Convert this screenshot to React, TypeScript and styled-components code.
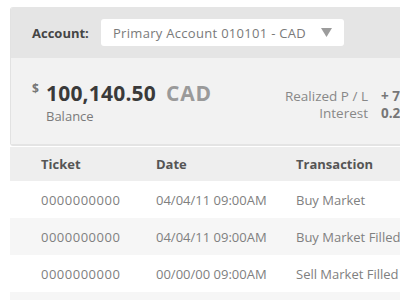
import styled, { createGlobalStyle } from 'styled-components';

const GlobalStyle = createGlobalStyle`
  html, body {
    margin: 0;
    padding: 0;
    background: #ffffff;
    overflow: hidden;
    font-family: "Open Sans", "Liberation Sans", sans-serif;
  }
`;

const Page = styled.div`
  width: 400px;
  height: 300px;
  overflow: hidden;
  padding: 7px 0 0 10px;
  box-sizing: border-box;
`;

const Sheet = styled.div`
  width: 640px;
`;

const Panel = styled.div`
  border-left: 1px solid #e2e2e2;
  border-bottom: 2px solid #e4e4e4;
  border-radius: 3px 0 0 3px;
  overflow: hidden;
`;

const AccountBar = styled.div`
  display: flex;
  align-items: center;
  height: 51px;
  padding-left: 21px;
  background: #e5e5e5;
`;

const Label = styled.span`
  font-size: 13px;
  font-weight: 700;
  color: #454545;
  width: 69px;
`;

const Select = styled.div`
  display: flex;
  align-items: center;
  justify-content: space-between;
  width: 243px;
  height: 27px;
  padding: 0 12px;
  box-sizing: border-box;
  background: #ffffff;
  border-radius: 3px;
  font-size: 13px;
  letter-spacing: 0.3px;
  color: #7a7a7a;
`;

const BalancePanel = styled.div`
  display: flex;
  align-items: flex-start;
  height: 86px;
  padding: 20px 0 0 21px;
  box-sizing: border-box;
  background: #f2f2f2;
`;

const BalanceBlock = styled.div`
  width: 250px;
`;

const Amount = styled.div`
  display: flex;
  align-items: flex-start;
  line-height: 30px;
`;

const Dollar = styled.span`
  font-size: 12px;
  font-weight: 700;
  color: #777;
  line-height: 18px;
  margin-top: 2px;
  width: 14px;
`;

const Figure = styled.span<{ $muted?: boolean }>`
  font-size: 21px;
  font-weight: 700;
  color: ${p => (p.$muted ? '#9a9a9a' : '#3a3a3a')};
  margin-right: ${p => (p.$muted ? '0' : '10px')};
  letter-spacing: ${p => (p.$muted ? '0.8px' : '0.2px')};
`;

const Caption = styled.div`
  font-size: 13px;
  color: #7a7a7a;
  padding-left: 14px;
  line-height: 16px;
`;

const Stats = styled.div`
  display: grid;
  grid-template-columns: 86px auto;
  column-gap: 13px;
  margin-top: 10px;
  font-size: 13.5px;
  line-height: 17px;
`;

const StatLabel = styled.span`
  text-align: right;
  color: #888;
  white-space: nowrap;
`;

const StatValue = styled.span`
  color: #777;
  font-weight: 700;
  white-space: nowrap;
`;

const Table = styled.div`
  margin-top: 1px;
`;

const Row = styled.div<{ $head?: boolean; $shade?: boolean }>`
  display: grid;
  grid-template-columns: 115px 140px 1fr;
  align-items: center;
  height: ${p => (p.$head ? '34px' : '37px')};
  padding-left: 31px;
  background: ${p => (p.$head ? '#eeeeee' : p.$shade ? '#f6f6f6' : '#ffffff')};
  font-size: 13px;
  font-weight: ${p => (p.$head ? 700 : 400)};
  color: ${p => (p.$head ? '#555555' : '#808080')};
  white-space: nowrap;
`;

const Ticket = styled.span`
  letter-spacing: 0.5px;
`;

const rows = [
  ['0000000000', '04/04/11 09:00AM', 'Buy Market'],
  ['0000000000', '04/04/11 09:00AM', 'Buy Market Filled'],
  ['0000000000', '00/00/00 09:00AM', 'Sell Market Filled'],
];

export default function App() {
  return (
    <>
      <GlobalStyle />
      <Page>
        <Sheet>
          <Panel>
            <AccountBar>
              <Label>Account:</Label>
              <Select>
                <span>Primary Account 010101 - CAD</span>
                <svg width="11" height="9" viewBox="0 0 11 9">
                  <path d="M0 0 H11 L5.5 9 Z" fill="#9c9c9c" />
                </svg>
              </Select>
            </AccountBar>
            <BalancePanel>
              <BalanceBlock>
                <Amount>
                  <Dollar>$</Dollar>
                  <Figure>100,140.50</Figure>
                  <Figure $muted>CAD</Figure>
                </Amount>
                <Caption>Balance</Caption>
              </BalanceBlock>
              <Stats>
                <StatLabel>Realized P / L</StatLabel>
                <StatValue>+ 750.00 CAD</StatValue>
                <StatLabel>Interest</StatLabel>
                <StatValue>0.25 CAD</StatValue>
              </Stats>
            </BalancePanel>
          </Panel>
          <Table>
            <Row $head>
              <span>Ticket</span>
              <span>Date</span>
              <span>Transaction</span>
            </Row>
            {rows.map((r, i) => (
              <Row key={i} $shade={i % 2 === 1}>
                <Ticket>{r[0]}</Ticket>
                <span>{r[1]}</span>
                <span>{r[2]}</span>
              </Row>
            ))}
            <Row $shade />
          </Table>
        </Sheet>
      </Page>
    </>
  );
}
